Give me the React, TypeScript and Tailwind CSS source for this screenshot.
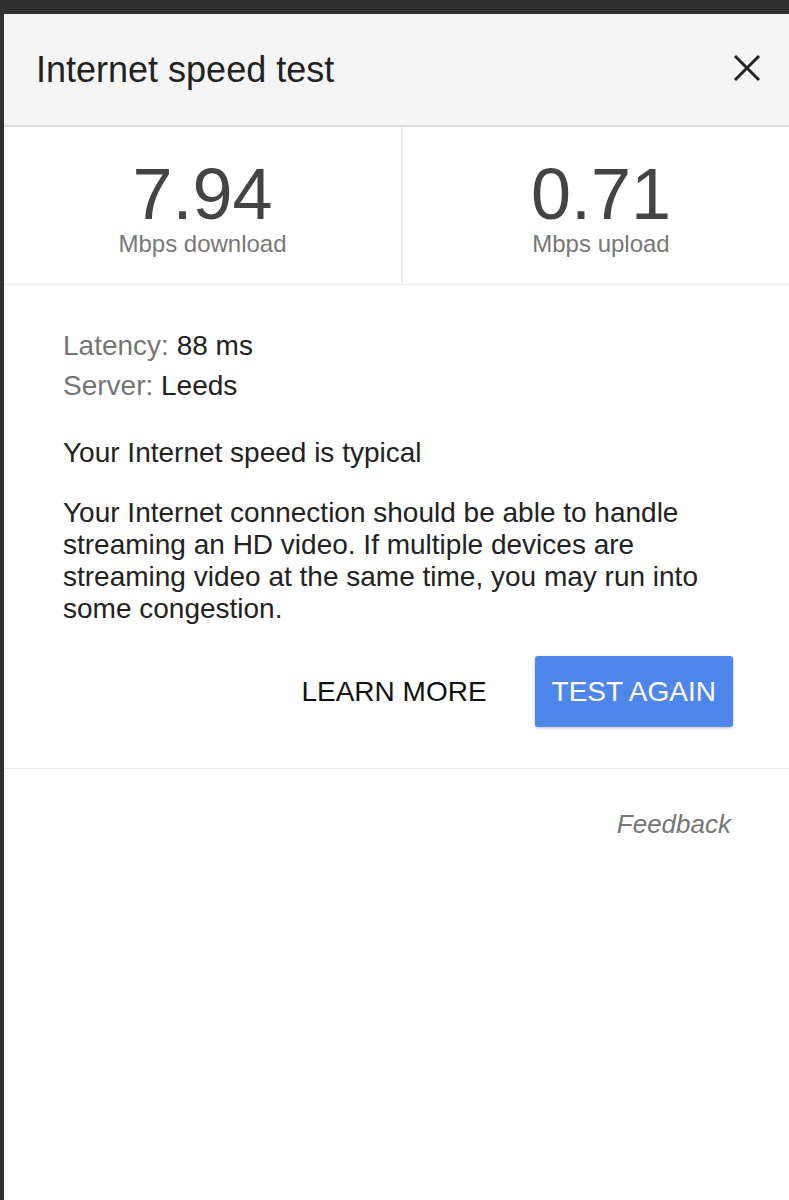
export default function App() {
  return (
    <div className="min-h-screen bg-[#303030] pl-[4px] pt-[14px] font-['Liberation_Sans',Arial,sans-serif]">
      <div className="min-h-[1186px] overflow-hidden bg-white">
        <header className="flex h-[113px] items-center justify-between border-b-2 border-[#dcdcdc] bg-[#f5f5f5] pl-[32px] pr-[28px]">
          <h1 className="text-[36px] leading-none text-[#222]">Internet speed test</h1>
          <button aria-label="Close" className="mb-[4px] text-[#222]">
            <svg width="28" height="28" viewBox="0 0 28 28" fill="none" stroke="currentColor" strokeWidth="3">
              <path d="M2 2L26 26M26 2L2 26" />
            </svg>
          </button>
        </header>

        <div className="grid w-[795px] grid-cols-[399px_396px] border-b border-[#eeeeee]">
          <Stat value="7.94" label="Mbps download" className="border-r-2 border-[#eeeeee]" />
          <Stat value="0.71" label="Mbps upload" />
        </div>

        <div className="border-b border-[#e8e8e8] pb-[41px] pl-[59px] pr-[56px] pt-[41px] text-[28px] text-[#222]">
          <p className="leading-[40px]">
            <span className="text-[#757575]">Latency:</span> 88 ms
          </p>
          <p className="leading-[40px]">
            <span className="text-[#757575]">Server:</span> Leeds
          </p>
          <p className="mt-[27px] leading-[40px]">Your Internet speed is typical</p>
          <p className="mt-[24px] leading-[32px]">
            Your Internet connection should be able to handle streaming an HD video. If multiple devices are
            streaming video at the same time, you may run into some congestion.
          </p>
          <div className="mt-[31px] flex items-center justify-end gap-[48px]">
            <button className="text-[28px] leading-none text-[#111]">LEARN MORE</button>
            <button className="h-[71px] rounded-[3px] bg-[#4f86ec] px-[17px] text-[28px] leading-none text-white shadow-[0_1px_3px_rgba(0,0,0,0.25)]">
              TEST AGAIN
            </button>
          </div>
        </div>

        <div className="flex justify-end pr-[58px] pt-[42px]">
          <a className="text-[26px] italic leading-none text-[#757575]">Feedback</a>
        </div>
      </div>
    </div>
  );
}

function Stat({ value, label, className = "" }: { value: string; label: string; className?: string }) {
  return (
    <div className={`flex flex-col items-center pb-[27px] pt-[30px] ${className}`}>
      <div className="text-[72px] leading-[74px] text-[#444]">{value}</div>
      <div className="text-[24px] leading-[26px] text-[#777]">{label}</div>
    </div>
  );
}
